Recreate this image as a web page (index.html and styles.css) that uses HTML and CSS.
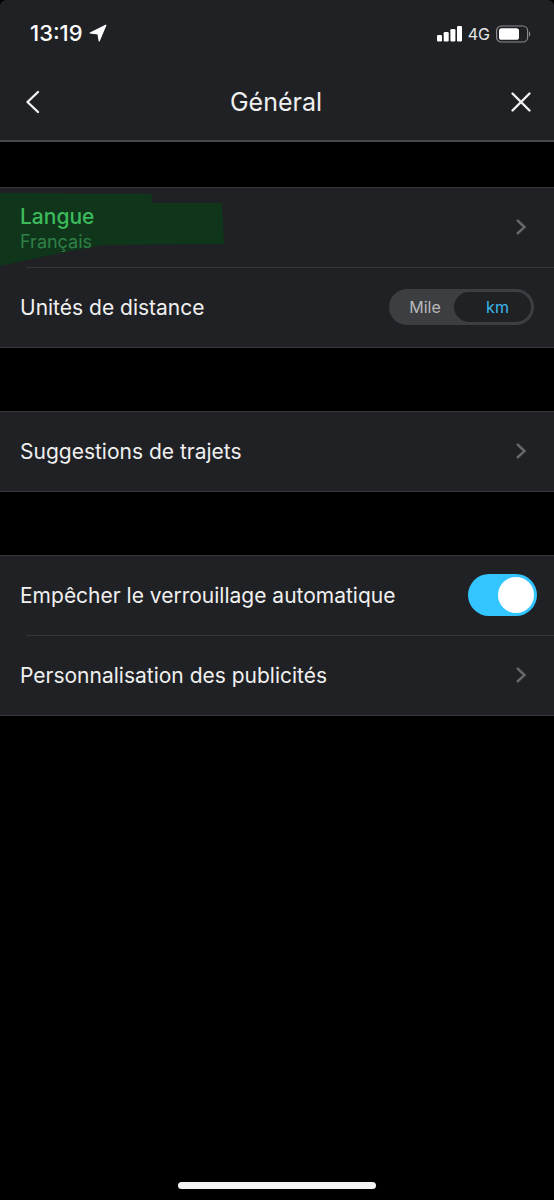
FILE: index.html
```html
<!DOCTYPE html>
<html lang="fr">
<head>
<meta charset="utf-8">
<title>Général</title>
<link rel="stylesheet" href="styles.css">
</head>
<body>
<div class="phone">
  <header class="top">
    <div class="status">
      <div class="status-left">
        <span class="time">13:19</span>
        <svg class="loc" width="18" height="18" viewBox="0 0 18 18"><path d="M16.800 1.200 1.200 9l7.800.9 1.200 7z" fill="#fff" stroke="#fff" stroke-width="1.200" stroke-linejoin="round"/></svg>
      </div>
      <div class="status-right">
        <svg width="25" height="16" viewBox="0 0 25 16"><g fill="#fff"><rect x="0" y="9" width="5" height="6.500" rx="1.200"/><rect x="6.700" y="6" width="5" height="9.500" rx="1.200"/><rect x="13.400" y="3" width="5" height="12.500" rx="1.200"/><rect x="20" y="0" width="5" height="15.500" rx="1.200"/></g></svg>
        <span class="net">4G</span>
        <svg width="35" height="18" viewBox="0 0 35 18"><rect x=".6" y="1" width="31" height="16" rx="4.600" fill="none" stroke="#8a8b8e" stroke-width="1.200"/><rect x="3" y="3.200" width="20" height="11.600" rx="2.600" fill="#fff"/><path d="M33 6.500c1.600.4 1.800 4.600 0 5z" fill="#8a8b8e"/></svg>
      </div>
    </div>
    <nav class="nav">
      <svg class="nav-icon" width="18" height="24" viewBox="0 0 18 24"><path d="M14 2 3.500 12 14 22" fill="none" stroke="#f2f2f2" stroke-width="2.400" stroke-linecap="round" stroke-linejoin="round"/></svg>
      <h1 class="title">Général</h1>
      <svg class="nav-icon" width="22" height="22" viewBox="0 0 22 22"><path d="M2.500 2.500l17 17M19.500 2.500l-17 17" fill="none" stroke="#f2f2f2" stroke-width="2.400" stroke-linecap="round"/></svg>
    </nav>
  </header>

  <section class="group first">
    <svg class="smear" width="224" height="80" viewBox="0 0 224 80"><path d="M0 5 152 6 152 15 222 15 224 56 104 57 60 65 0 78z" fill="#0f361a"/></svg>
    <div class="row inset">
      <div class="stack">
        <span class="label green">Langue</span>
        <span class="sub">Français</span>
      </div>
      <svg class="chev" width="12" height="18" viewBox="0 0 12 18"><path d="M2 2l7.500 7L2 16" fill="none" stroke="#66686b" stroke-width="2.400"/></svg>
    </div>
    <div class="row">
      <span class="label">Unités de distance</span>
      <div class="seg">
        <span class="seg-off">Mile</span>
        <span class="seg-on">km</span>
      </div>
    </div>
  </section>

  <section class="group">
    <div class="row">
      <span class="label">Suggestions de trajets</span>
      <svg class="chev" width="12" height="18" viewBox="0 0 12 18"><path d="M2 2l7.500 7L2 16" fill="none" stroke="#66686b" stroke-width="2.400"/></svg>
    </div>
  </section>

  <section class="group">
    <div class="row inset">
      <span class="label">Empêcher le verrouillage automatique</span>
      <div class="switch"><span class="knob"></span></div>
    </div>
    <div class="row">
      <span class="label">Personnalisation des publicités</span>
      <svg class="chev" width="12" height="18" viewBox="0 0 12 18"><path d="M2 2l7.500 7L2 16" fill="none" stroke="#66686b" stroke-width="2.400"/></svg>
    </div>
  </section>

  <div class="home"></div>
</div>
</body>
</html>
```

FILE: styles.css
```css
* { box-sizing: border-box; }
html, body { margin: 0; padding: 0; background: #000; }
body { font-family: Inter, "Liberation Sans", sans-serif; color: #f2f2f2; }
.phone { position: relative; width: 554px; height: 1200px; background: #000; overflow: hidden; }
.top { height: 142px; background: #202125; border-bottom: 2px solid #47484b; border-radius: 6px 6px 0 0; }
.status { height: 66px; display: flex; justify-content: space-between; align-items: flex-start; padding: 21px 23px 0 30px; }
.status-left { display: flex; align-items: center; gap: 6px; }
.time { font-size: 22px; line-height: 24px; font-weight: 500; color: #fff; }
.status-right { display: flex; align-items: center; gap: 6px; padding-top: 4px; }
.net { font-size: 16px; line-height: 18px; color: #e8e8e8; }
.nav { height: 74px; display: flex; align-items: center; justify-content: space-between; padding: 0 22px 2px 24px; }
.title { margin: 0; font-size: 25px; font-weight: 400; color: #f0f0f0; }
.nav-icon { display: block; }
.group { position: relative; margin-top: 63px; background: #202125; border-top: 1px solid #36373a; border-bottom: 1px solid #36373a; }
.group.first { margin-top: 45px; }
.smear { position: absolute; left: 0; top: 0; }
.row { position: relative; height: 79px; display: flex; align-items: center; justify-content: space-between; padding: 0 27px 2px 20px; }
.row.inset { height: 80px; }
.row.inset::after { content: ""; position: absolute; left: 26px; right: 0; bottom: 0; height: 1px; background: #36373a; }
.label { margin-top: 2px; font-size: 21px; line-height: 24px; color: #f0f0f0; }
.label.green { margin-top: 0; color: #3dbb5c; font-weight: 500; }
.stack { display: flex; flex-direction: column; padding-top: 6px; }
.sub { font-size: 18px; line-height: 26px; color: #2f8048; }
.chev { display: block; flex: none; }
.seg { display: flex; width: 145px; height: 36px; margin-right: -7px; padding: 3px; border-radius: 18px; background: #3c3e42; }
.seg-off { width: 62px; padding-left: 4px; text-align: center; font-size: 16px; line-height: 30px; color: #b8b9bb; }
.seg-on { flex: 1; padding-left: 10px; text-align: center; font-size: 16px; line-height: 30px; color: #3bb8ec; background: #202125; border-radius: 15px; }
.switch { width: 69px; height: 42px; margin-right: -10px; padding: 3px; display: flex; justify-content: flex-end; border-radius: 21px; background: #32c5ff; }
.knob { width: 36px; height: 36px; border-radius: 50%; background: #fff; }
.home { position: absolute; left: 178px; top: 1182px; width: 198px; height: 7px; border-radius: 4px; background: #f4f4f4; }
```
